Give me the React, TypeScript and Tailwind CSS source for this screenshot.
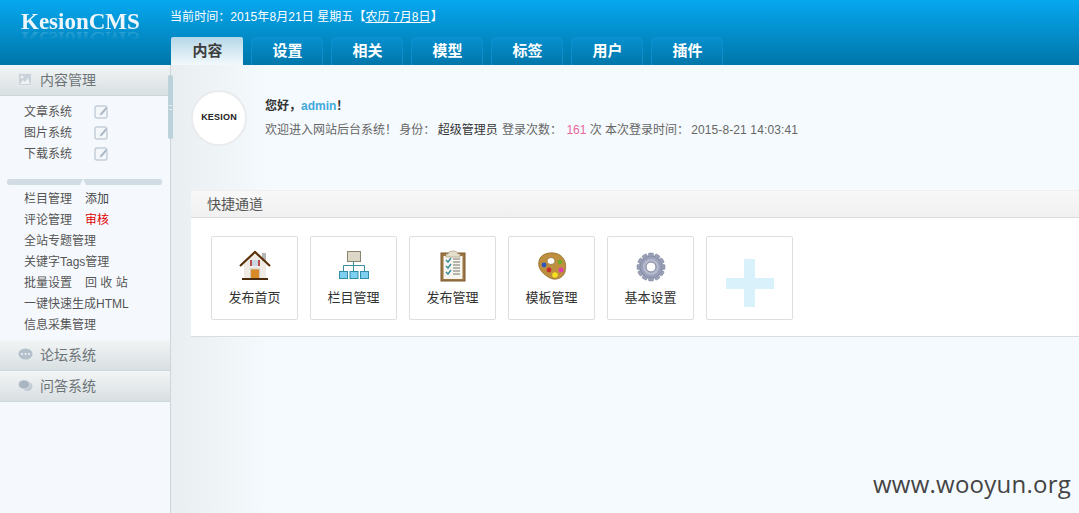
import React from 'react';

const cjk = "font-['Liberation_Sans','Noto_Sans_CJK_SC',sans-serif]";

const tabs = ['内容', '设置', '相关', '模型', '标签', '用户', '插件'];

const EditIcon = () => (
  <svg width="15" height="15" viewBox="0 0 15 15">
    <rect x="1" y="2" width="12" height="12" rx="2" fill="#f4f7fa" stroke="#c3ced8" strokeWidth="1.5" />
    <path d="M6 9.5 12 2.5l2 1.6-6 7-2.4.6z" fill="#aab8c5" stroke="#f5f9fe" strokeWidth="0.6" />
  </svg>
);

const SideHeader = ({ label, icon }: { label: string; icon: React.ReactNode }) => (
  <div className="flex h-[31px] items-center border-y border-t-[#f4f7f9] border-b-[#ced6dc] bg-gradient-to-b from-[#f1f4f5] to-[#d9e0e2] pb-[2px]">
    <span className="ml-[18px] flex w-[22px] items-center">{icon}</span>
    <span className="text-sm text-[#6d7478]">{label}</span>
  </div>
);

const SideRow = ({ children }: { children: React.ReactNode }) => (
  <div className="flex h-[21px] items-center pl-[24px] text-xs text-[#555]">{children}</div>
);

const HomeIcon = () => (
  <svg width="32" height="32" viewBox="0 0 32 32">
    <rect x="23" y="3" width="4" height="8" fill="#b5b5b5" />
    <path d="M5 14 16 4l11 10v15H5z" fill="#efebe4" />
    <path d="M1 16 16 2l15 14" fill="none" stroke="#5b3208" strokeWidth="2.2" />
    <rect x="11" y="10" width="10" height="6" fill="#b9504a" />
    <rect x="13" y="10" width="6" height="6" fill="#c9d8e4" />
    <rect x="11.500" y="19" width="9" height="10" fill="#d98a28" stroke="#cfcabf" />
    <rect x="3" y="28" width="26" height="2" fill="#4a2c0c" />
  </svg>
);

const TreeIcon = () => (
  <svg width="32" height="32" viewBox="0 0 32 32">
    <rect x="9.500" y="1.500" width="13" height="10" fill="#dcd7c6" stroke="#8a8470" />
    <path d="M15.500 11.500v4M5.500 21v-5.500h21V21M15.500 15.500V21" fill="none" stroke="#3d8e9c" />
    {[0, 10.500, 21].map(x => (
      <rect key={x} x={x + 1.5} y="21.500" width="8" height="7" fill="#7fd0f0" stroke="#2f8fa8" />
    ))}
  </svg>
);

const ClipboardIcon = () => (
  <svg width="26" height="32" viewBox="0 0 26 32">
    <rect x="1" y="3" width="24" height="28" fill="#9c7642" stroke="#7d5c2f" />
    <rect x="3.500" y="6" width="19" height="23" fill="#f6f5ef" />
    <path d="M8 4c0-4 10-4 10 0h2v3H6V4z" fill="#e4dfcc" stroke="#a89a7a" strokeWidth="0.7" />
    {[11, 17, 23].map(y => (
      <g key={y}>
        <path d={`M6 ${y - 1}l2 2 3-4`} fill="none" stroke="#3d8e9c" strokeWidth="1.500" />
        <path d={`M13 ${y - 2}h7M13 ${y + 1}h7`} stroke="#77766a" />
      </g>
    ))}
  </svg>
);

const PaletteIcon = () => (
  <svg width="30" height="30" viewBox="0 0 30 30">
    <path d="M2 9C3 2 13-1 21 2c7 3 9 11 7 18-2 6-9 9-15 6C7 23 0 17 2 9z" fill="#bd8f3e" stroke="#8d6425" strokeWidth="0.7" />
    <ellipse cx="14" cy="9" rx="4" ry="3.500" fill="#fff" stroke="#8d6425" strokeWidth="0.7" />
    <circle cx="23" cy="10" r="2.300" fill="#6fae2c" />
    <circle cx="7" cy="13" r="2.400" fill="#2b57c4" />
    <circle cx="12" cy="18" r="2.400" fill="#c82c2c" />
    <circle cx="24" cy="18" r="2.500" fill="#e03fa8" />
    <circle cx="18" cy="23" r="2.800" fill="#f5e020" />
  </svg>
);

const GearIcon = () => (
  <svg width="30" height="30" viewBox="0 0 30 30">
    <g fill="#9aa0b8" stroke="#777d96" strokeWidth="0.5">
      {[0, 30, 60, 90, 120, 150, 180, 210, 240, 270, 300, 330].map(a => (
        <rect key={a} x="12.500" y="1" width="5" height="6" rx="1" transform={`rotate(${a} 15 15)`} />
      ))}
      <circle cx="15" cy="15" r="11" />
    </g>
    <circle cx="15" cy="15" r="8" fill="#b4b9cc" />
    <circle cx="15" cy="15" r="5" fill="#fff" stroke="#7c8299" />
  </svg>
);

const shortcuts = [
  { label: '发布首页', icon: <HomeIcon /> },
  { label: '栏目管理', icon: <TreeIcon /> },
  { label: '发布管理', icon: <ClipboardIcon /> },
  { label: '模板管理', icon: <PaletteIcon /> },
  { label: '基本设置', icon: <GearIcon /> },
];

const App = () => {
  return (
    <div className={`relative flex h-[513px] w-[1079px] flex-col overflow-hidden bg-[#f5fafe] ${cjk}`}>
      {/* header */}
      <header className="flex h-[65px] shrink-0 bg-gradient-to-b from-[#07a8f0] to-[#0076a9]">
        <div className="w-[171px] pl-[21px] pt-[9px]">
          {/* logo text with its faded reflection */}
          <div className="font-['Liberation_Serif',serif] text-[23px] leading-[26px] font-bold text-[#eef8fc] [-webkit-box-reflect:below_-9px_linear-gradient(transparent_45%,rgba(255,255,255,0.3))]">
            KesionCMS
          </div>
        </div>
        <div className="-ml-px flex flex-col">
          <div className="h-[37px] pt-[9px] text-xs leading-[16px] tracking-[0.07px] text-white">
            当前时间：2015年8月21日 星期五【<span className="underline">农历 7月8日</span>】
          </div>
          <nav className="ml-px flex gap-2">
            {tabs.map((tab, i) => (
              <div
                key={tab}
                className={
                  i === 0
                    ? 'flex h-[28px] w-[72px] items-center justify-center rounded-t-[2px] bg-gradient-to-b from-[#b5d7e7] to-[#f3f9fc] pl-px text-[15px] font-bold text-[#3d3d3d]'
                    : 'flex h-[28px] w-[72px] items-center justify-center rounded-t-[2px] border border-b-0 border-[#0e8fcb] bg-gradient-to-b from-[#0890cf] to-[#0076a9] pl-px text-[15px] font-bold text-white'
                }
              >
                {tab}
              </div>
            ))}
          </nav>
        </div>
      </header>

      <div className="flex min-h-0 flex-1">
        {/* sidebar */}
        <aside className="relative h-full w-[171px] shrink-0 border-r border-[#ced6dc] bg-[#f5f9fe]">
          <SideHeader
            label="内容管理"
            icon={
              <svg width="14" height="13" viewBox="0 0 14 13">
                <rect x="0.500" y="0.500" width="13" height="12" fill="#c9d2d8" stroke="#e6ebee" />
                <circle cx="4" cy="4" r="1.500" fill="#eef2f4" />
                <path d="M2 11l3-4 2 2 3-4 2 6z" fill="#eef2f4" />
              </svg>
            }
          />
          <div className="pt-[5px]">
            {['文章系统', '图片系统', '下载系统'].map(item => (
              <SideRow key={item}>
                <span className="w-[70px]">{item}</span>
                <EditIcon />
              </SideRow>
            ))}
          </div>
          <div className="relative mx-[7px] mt-[15px] mb-[3px] h-[6px] w-[155px] rounded-[2px] bg-[#d2dce5]">
            <span className="absolute top-0 left-[73px] h-0 w-0 border-x-[3px] border-b-[6px] border-x-transparent border-b-[#f5f9fe]" />
          </div>
          <SideRow>
            <span className="w-[61px]">栏目管理</span>
            <span className="text-[#444]">添加</span>
          </SideRow>
          <SideRow>
            <span className="w-[61px]">评论管理</span>
            <span className="text-[#e00000]">审核</span>
          </SideRow>
          <SideRow>全站专题管理</SideRow>
          <SideRow>关键字Tags管理</SideRow>
          <SideRow>
            <span className="w-[61px]">批量设置</span>
            <span>回 收 站</span>
          </SideRow>
          <SideRow>一键快速生成HTML</SideRow>
          <SideRow>信息采集管理</SideRow>
          <div className="mt-[5px]">
            <SideHeader
              label="论坛系统"
              icon={
                <svg width="15" height="13" viewBox="0 0 15 13">
                  <ellipse cx="7.500" cy="6" rx="7" ry="5.500" fill="#b3bfcb" />
                  <circle cx="4" cy="6" r="1" fill="#f1f4f5" />
                  <circle cx="7.500" cy="6" r="1" fill="#f1f4f5" />
                  <circle cx="11" cy="6" r="1" fill="#f1f4f5" />
                </svg>
              }
            />
            <SideHeader
              label="问答系统"
              icon={
                <svg width="15" height="14" viewBox="0 0 15 14">
                  <ellipse cx="9.500" cy="7.500" rx="5" ry="4.500" fill="#c3ccd5" />
                  <ellipse cx="6" cy="5.500" rx="5.500" ry="4.500" fill="#a9b6c2" stroke="#e6ebee" strokeWidth="0.6" />
                </svg>
              }
            />
          </div>
          {/* scrollbar */}
          <div className="absolute top-[10px] -right-[3px] flex h-[64px] w-[5px] items-center justify-center rounded-[2px] bg-[#bcd2da]">
            <span className="h-[5px] w-[3px] border-y border-[#e3edf0]" />
          </div>
        </aside>

        {/* main */}
        <main className="flex-1 bg-gradient-to-r from-[#e9eef0] to-[#f5fafe] to-[11%] pt-[25px] pl-[20px]">
          <section className="flex h-[100px] items-start">
            <div className="flex h-[56px] w-[56px] items-center justify-center rounded-full border-2 border-[#e9ebee] bg-white font-['Liberation_Sans',sans-serif] text-[9px] font-bold tracking-[0.2px] text-[#222]">
              KESION
            </div>
            <div className="ml-[18px] pt-[4px] text-xs leading-[24px]">
              <div className="font-bold text-[#333]">
                您好，<span className="text-[#3fa9dc]">admin</span>！
              </div>
              <div className="text-[#666]">
                欢迎进入网站后台系统！ <span className="-ml-px">身份：</span> <span className="-ml-px text-[#333]">超级管理员</span>{' '}
                <span className="ml-px">登录次数：</span> <span className="ml-px text-[#e8689a]">161</span> 次 本次登录时间：
                <span className="ml-[2px] tracking-[0.12px]">2015-8-21 14:03:41</span>
              </div>
            </div>
          </section>

          <section className="border-b border-[#dcdcdc] bg-white">
            <div className="flex h-[28px] items-center border-y border-t-[#eef0f0] border-b-[#dcdcdc] bg-gradient-to-b from-[#f8f8f8] to-[#f0f0f0] pl-[16px] text-sm text-[#555]">
              快捷通道
            </div>
            <div className="flex gap-3 pt-[18px] pb-[16px] pl-[20px]">
              {shortcuts.map(item => (
                <div
                  key={item.label}
                  className="flex h-[84px] w-[87px] flex-col items-center rounded-[2px] border border-[#dedede] bg-white"
                >
                  <div className="flex h-[45px] items-end justify-center">{item.icon}</div>
                  <div className="mt-[7px] text-[13px] leading-[18px] text-[#333]">{item.label}</div>
                </div>
              ))}
              <div className="flex h-[84px] w-[87px] items-center justify-center rounded-[2px] border border-[#dedede] bg-white pt-[10px]">
                <svg width="48" height="48" viewBox="0 0 48 48">
                  <path d="M18 0h11v19h19v11H29v18H18V30H0V19h18z" fill="#d8f1fa" />
                </svg>
              </div>
            </div>
          </section>
        </main>
      </div>

      {/* watermark */}
      <div className="absolute top-[468px] left-[873px] font-['Open_Sans',sans-serif] text-[24px] leading-[32px] tracking-[0.24px] text-[#444]">
        www.wooyun.org
      </div>
    </div>
  );
};

export default App;
